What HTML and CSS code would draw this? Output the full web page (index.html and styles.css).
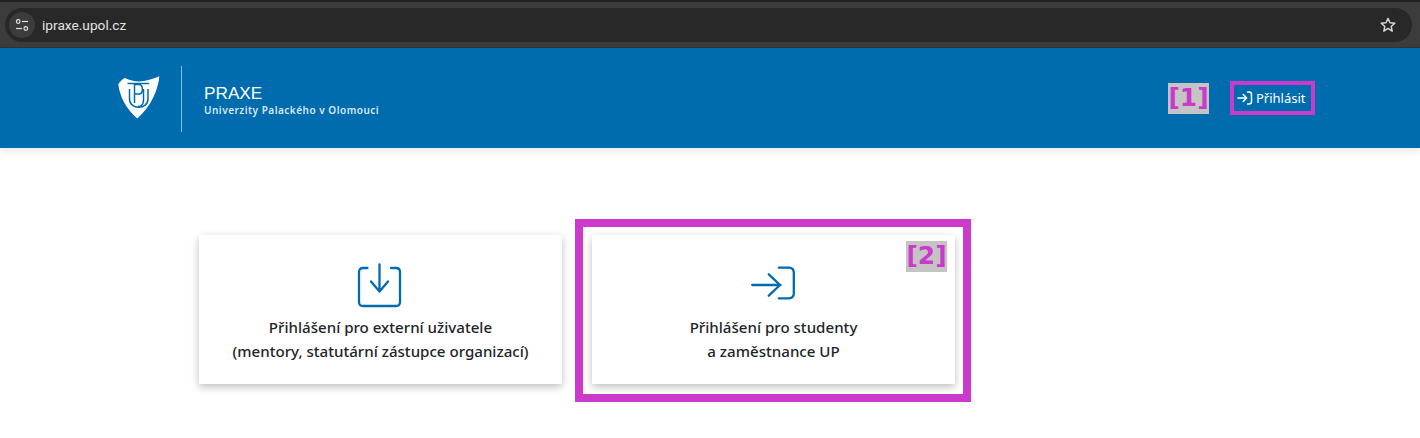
FILE: index.html
```html
<!DOCTYPE html>
<html lang="cs">
<head>
<meta charset="utf-8">
<title>PRAXE UP</title>
<link rel="stylesheet" href="styles.css">
</head>
<body>
<div class="browser">
  <div class="omnibox">
    <span class="site-btn">
      <svg width="16" height="16" viewBox="0 0 16 16" fill="none" stroke="#e3e3e3" stroke-width="1.2">
        <circle cx="4.2" cy="4.5" r="1.8"/><path d="M8 4.5h6"/>
        <circle cx="11.8" cy="11.5" r="1.8"/><path d="M2 11.5h6"/>
      </svg>
    </span>
    <span class="url">ipraxe.upol.cz</span>
    <svg class="star" width="16" height="16" viewBox="0 0 16 16" fill="none" stroke="#d8d8d8" stroke-width="1.4" stroke-linejoin="round">
      <path d="M8 1.4l2 4.4 4.8.5-3.6 3.2 1 4.7L8 11.4l-4.2 2.8 1-4.7L1.200 6.300l4.800-.5z"/>
    </svg>
  </div>
</div>
<header class="header">
  <div class="brand">
    <svg class="logo" width="42" height="44" viewBox="0 0 42 44">
      <path fill="#fff" d="M0.300 8C2 5.500 4.500 3.200 7 2 12 4.500 18 6 22 5.500 29 4.800 36 2.800 41.300 0.300 40.500 13 33 31 19.300 42.500 8 33 1.500 20 0.300 8z"/>
      <g fill="none" stroke="#006cae" stroke-width="1.500">
        <path d="M9.500 7.500H31"/>
        <path d="M16.500 7.500V27"/>
        <path d="M16.500 8.500H21C25.500 8.500 25.500 18 21 18H16.500"/>
        <path d="M11.500 13V23C11.500 34 30 34 30 23V13"/>
        <path d="M25.500 13V24C25.500 29 23 30.500 20 30.500"/>
      </g>
    </svg>
    <span class="rule"></span>
    <div class="brand-text">
      <div class="brand-title">PRAXE</div>
      <div class="brand-sub">Univerzity Palackého v Olomouci</div>
    </div>
  </div>
  <div class="actions">
    <span class="tag tag-one">[1]</span>
    <a class="login" href="#">
      <svg width="16" height="16" viewBox="0 0 16 16" fill="none" stroke="#fff" stroke-width="1.500" stroke-linecap="round" stroke-linejoin="round">
        <path d="M1 8h8.500M6.200 4.500L9.700 8l-3.500 3.500"/>
        <path d="M10.500 2h1.500c1.500 0 2.500 1 2.500 2.500v7c0 1.500-1 2.500-2.500 2.500h-1.500"/>
      </svg>
      <span>Přihlásit</span>
    </a>
  </div>
</header>
<main class="cards">
  <a class="card" href="#">
    <svg class="card-icon icon-in" width="48" height="48" viewBox="0 0 48 48" fill="none" stroke="#006cae" stroke-width="2.300" stroke-linecap="round" stroke-linejoin="round">
      <path d="M11.500 6H7C4.500 6 3 7.500 3 10V40C3 42.500 4.500 44 7 44H40C42.500 44 44 42.500 44 40V10C44 7.500 42.500 6 40 6H35"/>
      <path d="M23.500 2.500V29.500M15 19.500L23.500 29.500 32 19.500"/>
    </svg>
    <p class="card-text">Přihlášení pro externí uživatele<br>(mentory, statutární zástupce organizací)</p>
  </a>
  <a class="card card-marked" href="#">
    <svg class="card-icon" width="48" height="48" viewBox="0 0 48 48" fill="none" stroke="#006cae" stroke-width="2.300" stroke-linecap="round" stroke-linejoin="round">
      <path d="M28.800 5.700H38.800C42 5.700 43.800 7.500 43.800 10.700V31.300C43.800 34.500 42 36.300 38.800 36.300H28.800"/>
      <path d="M2.200 23H30.500M18.800 12.300L30 23 18.800 33.700"/>
    </svg>
    <p class="card-text">Přihlášení pro studenty<br>a zaměstnance UP</p>
    <span class="mark"></span>
    <span class="tag tag-two">[2]</span>
  </a>
</main>
</body>
</html>
```
FILE: styles.css
```css
* { box-sizing: border-box; }
html, body { margin: 0; padding: 0; }
body {
  width: 1420px;
  height: 438px;
  overflow: hidden;
  background: #fff;
  font-family: "Noto Sans", "Open Sans", sans-serif;
}
.browser {
  height: 48px;
  padding: 6px 8px 6px 5px;
  background: #3c3c3c;
  border-top: 2px solid #222;
  border-bottom: 1px solid #333;
}
.omnibox {
  height: 34px;
  display: flex;
  align-items: center;
  padding: 0 16px 0 4px;
  border-radius: 17px;
  background: #282828;
}
.site-btn {
  width: 26px;
  height: 26px;
  border-radius: 50%;
  background: #3c3c3c;
  display: flex;
  align-items: center;
  justify-content: center;
}
.url {
  margin-left: 7px;
  color: #e3e3e3;
  font: 13.700px Roboto, sans-serif;
}
.star { margin-left: auto; }
.header {
  position: relative;
  height: 100px;
  background: #006cae;
  display: flex;
  align-items: center;
  justify-content: space-between;
  padding: 0 105px 0 118px;
  box-shadow: 0 3px 8px rgba(0, 0, 0, .1);
}
.brand { display: flex; align-items: center; padding-top: 2px; }
.logo { display: block; margin-top: -2px; }
.rule {
  width: 1px;
  height: 66px;
  margin: 0 22px 0 21px;
  background: rgba(255, 255, 255, .55);
}
.brand-title {
  margin-top: 2px;
  color: #fff;
  font: 17.200px/20px "Liberation Sans", Arial, sans-serif;
}
.brand-sub {
  margin-top: 1px;
  color: #d9e8f3;
  font: 600 10px/13px "Noto Sans", sans-serif;
  letter-spacing: .5px;
}
.actions { display: flex; align-items: center; gap: 21px; }
.tag {
  display: block;
  width: 41px;
  height: 31px;
  background: #c4c4c4;
  color: #cc3acc;
  text-align: center;
  font: 700 25px/30px "DejaVu Sans", sans-serif;
  white-space: nowrap;
}
.login {
  width: 85px;
  height: 34px;
  border: 4px solid #cc3acc;
  color: #fff;
  text-decoration: none;
  display: flex;
  align-items: center;
  gap: 3px;
  padding-left: 3px;
  font-size: 13px;
}
.cards {
  display: flex;
  gap: 30px;
  padding: 87px 0 0 199px;
}
.card {
  position: relative;
  width: 363px;
  height: 149px;
  background: #fff;
  color: #212529;
  text-decoration: none;
  text-align: center;
  box-shadow: 0 3px 8px rgba(0, 0, 0, .25);
  padding-top: 27px;
}
.card-icon { display: block; margin: 0 auto; }
.icon-in { transform: translateX(-1px); }
.card-text {
  margin: 5px 0 0;
  font-size: 15.100px;
  font-weight: 500;
  line-height: 24px;
}
.mark {
  position: absolute;
  inset: -16px -16px -18px -17px;
  border: 8px solid #cc3acc;
  pointer-events: none;
}
.tag-two {
  position: absolute;
  top: 6px;
  right: 8px;
}
```
